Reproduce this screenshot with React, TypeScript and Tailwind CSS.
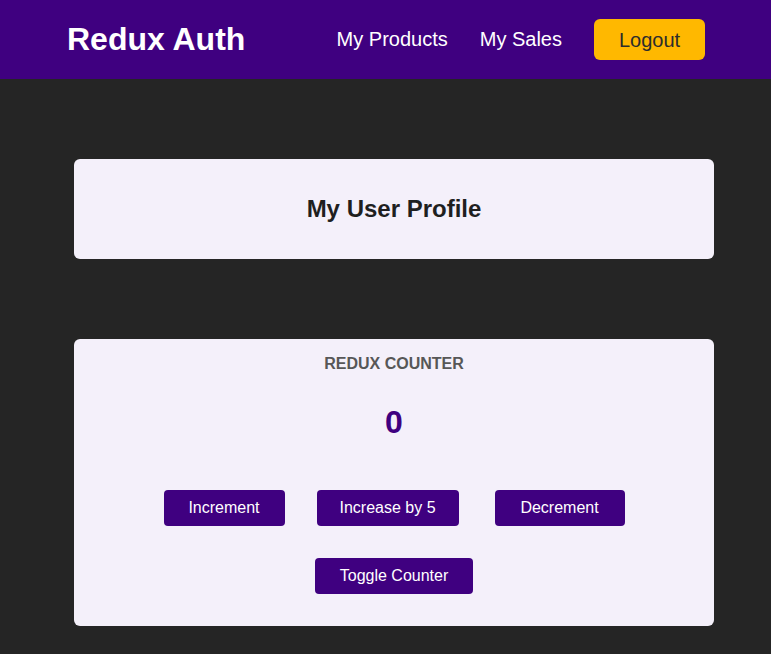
import React, { useState } from "react";

const FONT = { fontFamily: '"Liberation Sans", Arial, sans-serif' };

function Header() {
  return (
    <header className="flex h-[79px] items-center justify-between bg-[#3f0080] pb-[2px] pl-[67px] pr-[66px]">
      <h1 className="text-[32px] font-bold text-white">Redux Auth</h1>
      <nav>
        <ul className="flex items-center gap-8 text-[20px]">
          <li>
            <a href="#" className="text-white">
              My Products
            </a>
          </li>
          <li>
            <a href="#" className="text-white">
              My Sales
            </a>
          </li>
          <li className="mt-[2px]">
            <button className="h-[41px] w-[111px] rounded-md bg-[#ffb800] text-[20px] text-[#2c2c2c]">
              Logout
            </button>
          </li>
        </ul>
      </nav>
    </header>
  );
}

const btn =
  "h-9 whitespace-nowrap rounded bg-[#3f0080] text-base text-white";

function Counter() {
  const [count, setCount] = useState(0);
  const [show, setShow] = useState(true);

  return (
    <section className="flex h-[287px] w-[640px] flex-col items-center rounded-md bg-[#f4f0fa] pt-4">
      <h2 className="text-base font-bold leading-[18px] text-[#575757]">
        REDUX COUNTER
      </h2>
      <div className="mt-[31px] h-[37px] text-[32px] font-bold leading-[37px] text-[#3f0080]">
        {show ? count : ""}
      </div>
      <div className="mt-[49px] flex gap-8">
        <button className={`${btn} w-[121px]`} onClick={() => setCount(count + 1)}>
          Increment
        </button>
        <button className={`${btn} w-[142px]`} onClick={() => setCount(count + 5)}>
          Increase by 5
        </button>
        <button className={`${btn} ml-1 w-[130px]`} onClick={() => setCount(count - 1)}>
          Decrement
        </button>
      </div>
      <div className="mt-8">
        <button className={`${btn} w-[158px]`} onClick={() => setShow(!show)}>
          Toggle Counter
        </button>
      </div>
    </section>
  );
}

export default function App() {
  return (
    <div className="min-h-[654px] bg-[#252525]" style={FONT}>
      <Header />
      <main className="pl-[74px] pt-20">
        <section className="flex h-[100px] w-[640px] items-center justify-center rounded-md bg-[#f4f0fa]">
          <h2 className="text-2xl font-bold text-[#1f1f1f]">My User Profile</h2>
        </section>
        <div className="h-20" />
        <Counter />
      </main>
    </div>
  );
}
